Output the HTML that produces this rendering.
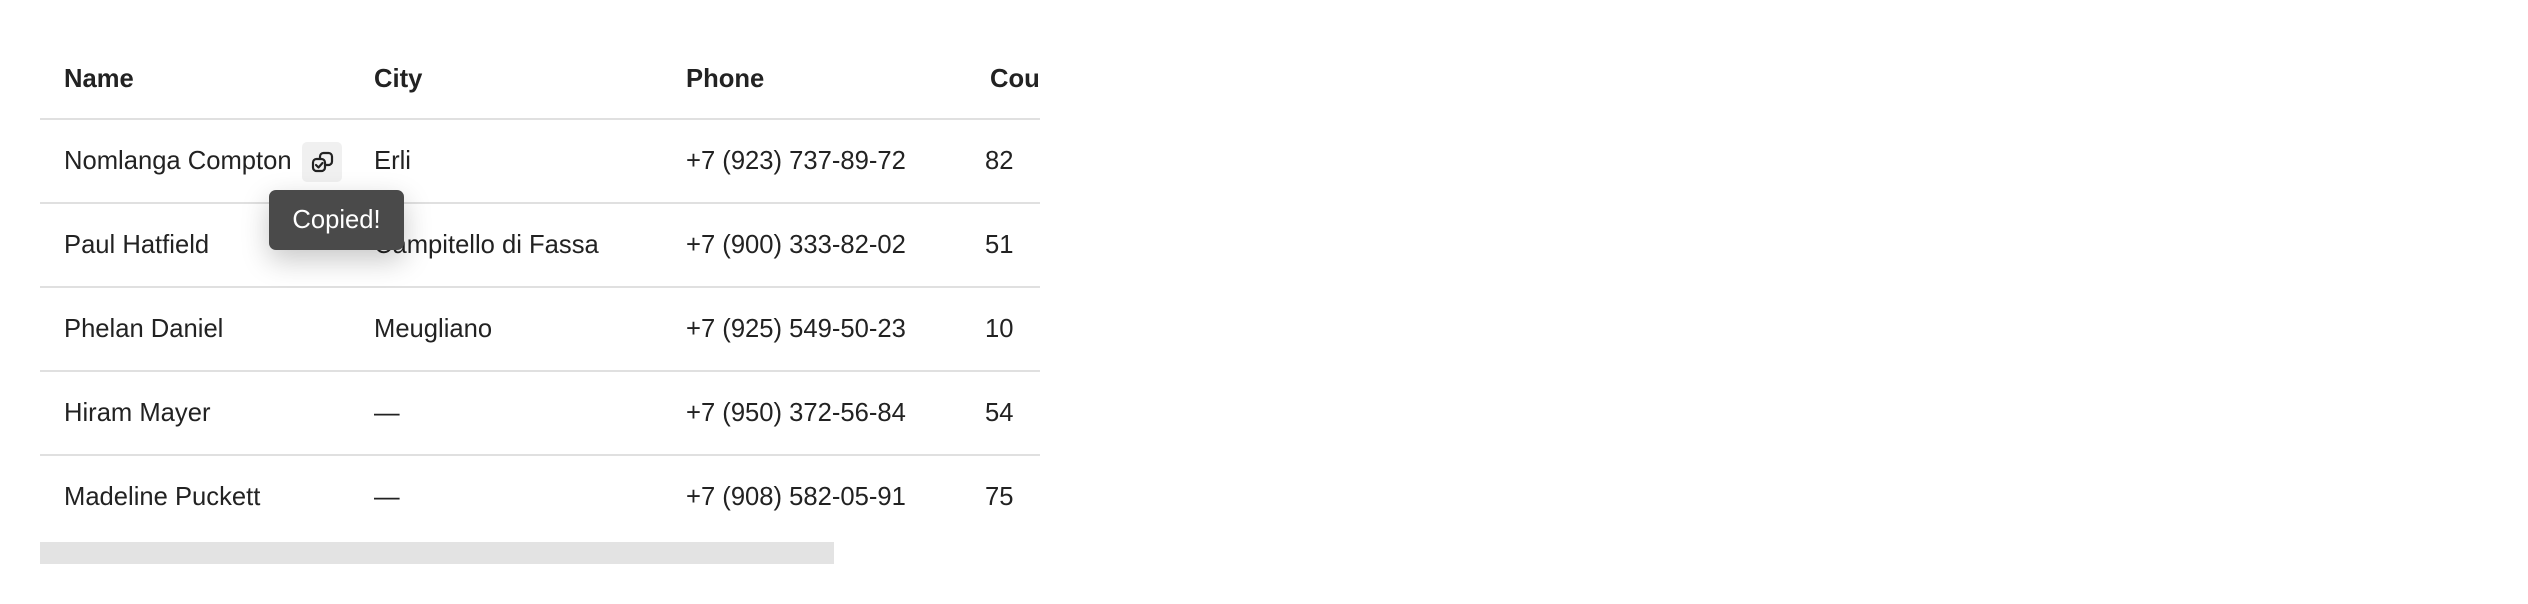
<!DOCTYPE html><html><head><style>
body{margin:0;width:2528px;height:604px;background:#fff;position:relative;overflow:hidden;font-family:"Liberation Sans",sans-serif;color:#222;}
.t{position:absolute;font-size:25.6px;line-height:30px;white-space:nowrap;}
.h{font-weight:bold;}
.line{position:absolute;left:40px;width:1000px;height:2px;background:#e0e0e0;}
.clip{position:absolute;left:0;top:0;width:1040px;height:604px;overflow:hidden;}
</style></head><body>
<div class="clip">
<div class="t h" style="left:64px;top:64px">Name</div>
<div class="t h" style="left:374px;top:64px">City</div>
<div class="t h" style="left:686px;top:64px">Phone</div>
<div class="t h" style="left:990px;top:64px">Country</div>
<div class="line" style="top:118px"></div>
<div class="line" style="top:202px"></div>
<div class="line" style="top:286px"></div>
<div class="line" style="top:370px"></div>
<div class="line" style="top:454px"></div>

<div class="t" style="left:64px;top:146px">Nomlanga Compton</div>
<div class="t" style="left:374px;top:146px">Erli</div>
<div class="t" style="left:686px;top:146px">+7 (923) 737-89-72</div>
<div class="t" style="left:985px;top:146px">82</div>

<div class="t" style="left:64px;top:230px">Paul Hatfield</div>
<div class="t" style="left:374px;top:230px">Campitello di Fassa</div>
<div class="t" style="left:686px;top:230px">+7 (900) 333-82-02</div>
<div class="t" style="left:985px;top:230px">51</div>

<div class="t" style="left:64px;top:314px">Phelan Daniel</div>
<div class="t" style="left:374px;top:314px">Meugliano</div>
<div class="t" style="left:686px;top:314px">+7 (925) 549-50-23</div>
<div class="t" style="left:985px;top:314px">10</div>

<div class="t" style="left:64px;top:398px">Hiram Mayer</div>
<div class="t" style="left:374px;top:398px">—</div>
<div class="t" style="left:686px;top:398px">+7 (950) 372-56-84</div>
<div class="t" style="left:985px;top:398px">54</div>

<div class="t" style="left:64px;top:482px">Madeline Puckett</div>
<div class="t" style="left:374px;top:482px">—</div>
<div class="t" style="left:686px;top:482px">+7 (908) 582-05-91</div>
<div class="t" style="left:985px;top:482px">75</div>
</div>
<div style="position:absolute;left:40px;top:542px;width:794px;height:22px;background:#e3e3e3"></div>

<div style="position:absolute;left:302px;top:142px;width:40px;height:40px;background:#f0f0f0;border-radius:5px">
<svg width="40" height="40" viewBox="0 0 40 40" fill="none" stroke="#222" stroke-width="2.2" stroke-linecap="round" stroke-linejoin="round">
<rect x="18" y="11" width="12" height="12" rx="3.5"/>
<rect x="11" y="17" width="12" height="12" rx="3.5" fill="#f0f0f0"/>
<path d="M14 23l2.5 2.5 4-4.5"/>
</svg></div>
<div style="position:absolute;left:269px;top:190px;width:135px;height:60px;background:#4a4a4a;border-radius:7px;box-shadow:0 10px 28px rgba(0,0,0,0.22);color:#fff;font-size:25.6px;line-height:60px;text-align:center">Copied!</div>
</body></html>
